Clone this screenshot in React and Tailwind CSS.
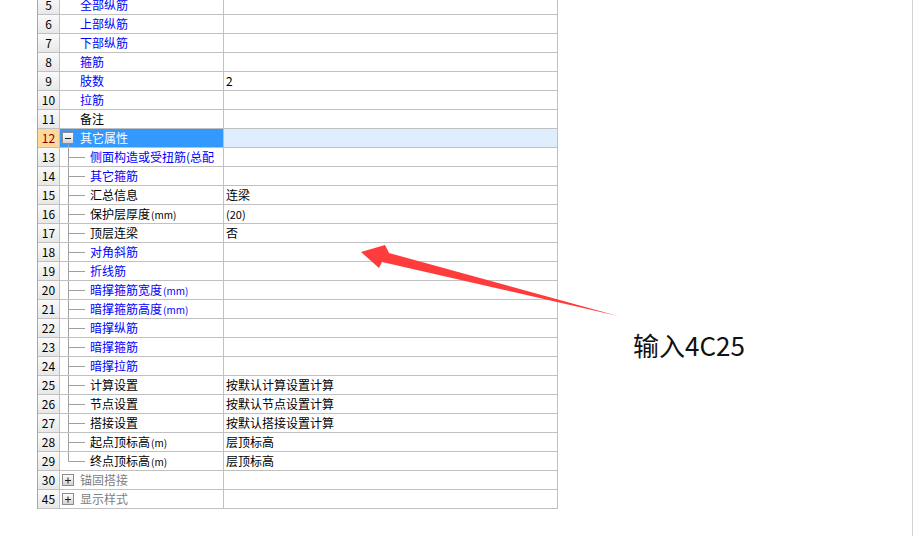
import React from "react";

const FONT = { fontFamily: '"Noto Sans CJK SC", "Noto Sans", sans-serif' };

const rows = [
  { n: 5, t: "全部纵筋", c: "blue", lvl: 1 },
  { n: 6, t: "上部纵筋", c: "blue", lvl: 1 },
  { n: 7, t: "下部纵筋", c: "blue", lvl: 1 },
  { n: 8, t: "箍筋", c: "blue", lvl: 1 },
  { n: 9, t: "肢数", c: "blue", lvl: 1, v: "2" },
  { n: 10, t: "拉筋", c: "blue", lvl: 1 },
  { n: 11, t: "备注", c: "black", lvl: 1 },
  { n: 12, t: "其它属性", c: "white", lvl: 0, group: "open", sel: true },
  { n: 13, t: "侧面构造或受扭筋(总配", c: "blue", lvl: 2 },
  { n: 14, t: "其它箍筋", c: "blue", lvl: 2 },
  { n: 15, t: "汇总信息", c: "black", lvl: 2, v: "连梁" },
  { n: 16, t: "保护层厚度", u: "(mm)", c: "black", lvl: 2, v: "(20)" },
  { n: 17, t: "顶层连梁", c: "black", lvl: 2, v: "否" },
  { n: 18, t: "对角斜筋", c: "blue", lvl: 2 },
  { n: 19, t: "折线筋", c: "blue", lvl: 2 },
  { n: 20, t: "暗撑箍筋宽度", u: "(mm)", c: "blue", lvl: 2 },
  { n: 21, t: "暗撑箍筋高度", u: "(mm)", c: "blue", lvl: 2 },
  { n: 22, t: "暗撑纵筋", c: "blue", lvl: 2 },
  { n: 23, t: "暗撑箍筋", c: "blue", lvl: 2 },
  { n: 24, t: "暗撑拉筋", c: "blue", lvl: 2 },
  { n: 25, t: "计算设置", c: "black", lvl: 2, v: "按默认计算设置计算" },
  { n: 26, t: "节点设置", c: "black", lvl: 2, v: "按默认节点设置计算" },
  { n: 27, t: "搭接设置", c: "black", lvl: 2, v: "按默认搭接设置计算" },
  { n: 28, t: "起点顶标高", u: "(m)", c: "black", lvl: 2, v: "层顶标高" },
  { n: 29, t: "终点顶标高", u: "(m)", c: "black", lvl: 2, v: "层顶标高", last: true },
  { n: 30, t: "锚固搭接", c: "gray", lvl: 0, group: "closed" },
  { n: 45, t: "显示样式", c: "gray", lvl: 0, group: "closed" },
];

const colorClass = {
  blue: "text-[#0000ff]",
  black: "text-[#000000]",
  white: "text-white",
  gray: "text-[#808080]",
};

function ExpandBox({ open }) {
  return (
    <svg width="20" height="18" className="shrink-0 overflow-visible">
      <defs>
        <linearGradient id="bx" x1="0" y1="0" x2="0" y2="1">
          <stop offset="0" stopColor="#ffffff" />
          <stop offset="1" stopColor="#d2d2d2" />
        </linearGradient>
      </defs>
      <rect x="2.5" y="3.5" width="11" height="11" fill="url(#bx)" stroke="#8c8c8c" />
      <line x1="5" y1="9.5" x2="11" y2="9.5" stroke="#222" />
      {!open && <line x1="8" y1="6.5" x2="8" y2="12.5" stroke="#222" />}
      {open && <line x1="8.5" y1="15" x2="8.5" y2="19" stroke="#a0a0a0" />}
    </svg>
  );
}

function Tree({ last }) {
  return (
    <svg width="26" height="18" className="shrink-0 overflow-visible">
      <line x1="8.5" y1="0" x2="8.5" y2={last ? 9.5 : 19} stroke="#a0a0a0" />
      <line x1="8.5" y1="9.5" x2="25" y2="9.5" stroke="#a0a0a0" />
    </svg>
  );
}

function Row({ r }) {
  return (
    <div className="flex h-[19px] border-b border-[#c0c0c0]">
      <div
        className={
          "w-[22px] shrink-0 border-r border-[#c0c0c0] flex items-center justify-center text-[12px] leading-none " +
          (r.sel
            ? "bg-[#ffd99c] text-[#800000]"
            : "bg-gradient-to-b from-[#fafafa] to-[#e8e8e8] text-black")
        }
      >
        {r.n}
      </div>
      <div
        className={
          "w-[164px] shrink-0 border-r border-[#c0c0c0] flex items-center overflow-hidden whitespace-nowrap text-[12px] leading-none " +
          (r.sel ? "bg-[#3399ff] " : "") +
          colorClass[r.c]
        }
      >
        {r.lvl === 1 && <div className="w-[20px] shrink-0" />}
        {r.lvl === 0 && <ExpandBox open={r.group === "open"} />}
        {r.lvl === 2 && (
          <>
            <Tree last={r.last} />
            <div className="w-[4px] shrink-0" />
          </>
        )}
        <span>
          {r.t}
          {r.u && <span className="text-[10px] ml-px">{r.u}</span>}
        </span>
      </div>
      <div
        className={
          "flex-1 flex items-center pl-[2px] overflow-hidden whitespace-nowrap text-[12px] leading-none text-black " +
          (r.sel ? "bg-[#deeeff]" : "")
        }
      >
        {r.v === "(20)" ? <span className="text-[11px]">(20)</span> : r.v}
      </div>
    </div>
  );
}

export default function App() {
  return (
    <div className="relative w-[921px] h-[536px] overflow-hidden bg-white flex" style={FONT}>
      <div className="w-[37px] shrink-0" />
      <div className="w-[521px] shrink-0 self-start -mt-[4px] border-l border-r border-l-[#a8a8a8] border-r-[#c0c0c0]">
        {rows.map((r) => (
          <Row key={r.n} r={r} />
        ))}
      </div>
      <div className="w-[354px] shrink-0 pl-[75px] pt-[328px]">
        <div className="text-[26px] leading-[33px] text-[#111111] whitespace-nowrap">输入4C25</div>
      </div>
      <div className="w-px shrink-0 bg-[#d2d2d2]" />
      <div className="flex-1" />
      <svg className="absolute inset-0 pointer-events-none" width="921" height="536">
        <polygon
          points="361,252 385,245 389,253 618,316 382,262 379,268"
          fill="#ff3c3c"
        />
      </svg>
    </div>
  );
}
